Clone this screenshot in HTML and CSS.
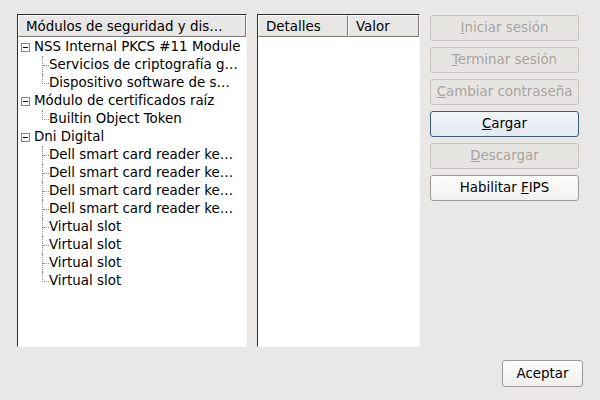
FILE: index.html
```html
<!DOCTYPE html>
<html lang="es">
<head>
<meta charset="utf-8">
<title>Dispositivos de seguridad</title>
<link rel="stylesheet" href="styles.css">
</head>
<body>
<div class="dialog">
  <div class="main">
    <div class="panel tree">
      <div class="header"><div class="hcell full">Módulos de seguridad y dis…</div></div>
      <div class="rows">
        <div class="row top"><span class="exp"></span><span class="label">NSS Internal PKCS #11 Module</span></div>
        <div class="row child"><span class="conn"><span class="arm"></span></span><span class="label">Servicios de criptografía g…</span></div>
        <div class="row child"><span class="conn last"></span><span class="label">Dispositivo software de s…</span></div>
        <div class="row top"><span class="exp"></span><span class="label">Módulo de certificados raíz</span></div>
        <div class="row child"><span class="conn last"></span><span class="label">Builtin Object Token</span></div>
        <div class="row top"><span class="exp"></span><span class="label">Dni Digital</span></div>
        <div class="row child"><span class="conn"><span class="arm"></span></span><span class="label">Dell smart card reader ke…</span></div>
        <div class="row child"><span class="conn"><span class="arm"></span></span><span class="label">Dell smart card reader ke…</span></div>
        <div class="row child"><span class="conn"><span class="arm"></span></span><span class="label">Dell smart card reader ke…</span></div>
        <div class="row child"><span class="conn"><span class="arm"></span></span><span class="label">Dell smart card reader ke…</span></div>
        <div class="row child"><span class="conn"><span class="arm"></span></span><span class="label">Virtual slot</span></div>
        <div class="row child"><span class="conn"><span class="arm"></span></span><span class="label">Virtual slot</span></div>
        <div class="row child"><span class="conn"><span class="arm"></span></span><span class="label">Virtual slot</span></div>
        <div class="row child"><span class="conn last"></span><span class="label">Virtual slot</span></div>
      </div>
    </div>
    <div class="panel details">
      <div class="header"><div class="hcell col1">Detalles</div><div class="hcell col2">Valor</div></div>
    </div>
    <div class="buttons">
      <button class="btn disabled"><u>I</u>niciar sesión</button>
      <button class="btn disabled"><u>T</u>erminar sesión</button>
      <button class="btn disabled"><u>C</u>ambiar contraseña</button>
      <button class="btn focus"><u>C</u>argar</button>
      <button class="btn disabled"><u>D</u>escargar</button>
      <button class="btn">Habilitar <u>F</u>IPS</button>
    </div>
  </div>
  <div class="footer">
    <button class="btn ok">Aceptar</button>
  </div>
</div>
</body>
</html>
```
FILE: styles.css
```css
html, body {
  margin: 0;
  padding: 0;
}
body {
  width: 600px;
  height: 400px;
  background: #eae8e6;
  font-family: "DejaVu Sans", sans-serif;
  font-size: 13.4px;
  color: #000;
  overflow: hidden;
}
.dialog {
  display: flex;
  flex-direction: column;
  padding: 14px 17px 0 17px;
}
.main {
  display: flex;
  align-items: flex-start;
}
.panel {
  height: 333px;
  box-sizing: border-box;
  background: #fff;
  border-top: 1px solid #2e2e2e;
  border-left: 1px solid #2e2e2e;
  border-right: 1px solid #f8f8f8;
  border-bottom: 1px solid #f8f8f8;
  display: flex;
  flex-direction: column;
}
.tree {
  width: 230px;
}
.details {
  width: 163px;
  margin-left: 10px;
}
.header {
  display: flex;
  height: 22px;
  flex: none;
}
.hcell {
  box-sizing: border-box;
  height: 22px;
  background: #e8e7e5;
  border: 1px solid #7a7875;
  border-top-color: #fbfbfa;
  border-left-color: #fbfbfa;
  line-height: 21px;
  padding-left: 7px;
  white-space: nowrap;
  overflow: hidden;
}
.full { width: 100%; }
.col1 { width: 90px; }
.col2 { flex: 1; }
.rows {
  display: flex;
  flex-direction: column;
  padding-top: 1px;
}
.row {
  height: 18px;
  display: flex;
  align-items: center;
  white-space: nowrap;
}
.top {
  padding-left: 3px;
}
.exp {
  width: 7px;
  height: 7px;
  border: 1px solid #8a8682;
  background: #fff;
  margin-right: 4px;
  display: flex;
  align-items: center;
  justify-content: center;
  flex: none;
}
.exp::before {
  content: "";
  width: 5px;
  height: 1px;
  background: #000;
}
.child {
  padding-left: 24px;
  align-items: stretch;
}
.conn {
  width: 6px;
  border-left: 1px dotted #8c8c8c;
  flex: none;
}
.conn .arm {
  display: block;
  height: 9px;
  border-bottom: 1px dotted #8c8c8c;
}
.conn.last {
  height: 9px;
  border-bottom: 1px dotted #8c8c8c;
}
.label {
  line-height: 18px;
}
.buttons {
  display: flex;
  flex-direction: column;
  gap: 6px;
  margin-left: 10px;
  margin-top: 1px;
}
.btn {
  font-family: "DejaVu Sans", sans-serif;
  font-size: 13.4px;
  box-sizing: border-box;
  width: 149px;
  height: 26px;
  padding: 0;
  border: 1px solid #9e9b97;
  border-radius: 3px;
  background: linear-gradient(#fdfdfc, #f1f0ef);
  color: #000;
  text-align: center;
  line-height: 24px;
}
.btn.disabled {
  background: #e7e5e2;
  border-color: #c6c2bd;
  color: #a7a39e;
}
.btn.focus {
  background: linear-gradient(#f1f5f8, #e2eaf0);
  border-color: #3d5a78;
}
.footer {
  display: flex;
  justify-content: flex-end;
  padding-top: 13px;
}
.btn.ok {
  width: 81px;
  height: 27px;
}
```
